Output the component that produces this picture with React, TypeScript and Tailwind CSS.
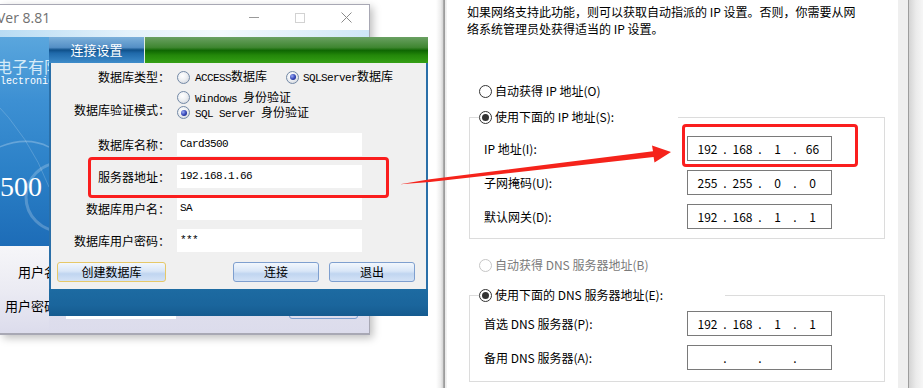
import React from 'react'

function M({ children }: { children: React.ReactNode }) {
  return <span className="font-['Liberation_Mono',monospace] text-[11px] tracking-[-0.6px]">{children}</span>
}

function XpRadio({ checked }: { checked?: boolean }) {
  return (
    <span className="flex h-[13px] w-[13px] shrink-0 items-center justify-center rounded-full border border-[#7389a6] bg-[radial-gradient(circle_at_40%_35%,#ffffff_0%,#eef0f3_45%,#c9ced6_100%)]">
      {checked && <span className="h-[6px] w-[6px] rounded-full bg-[radial-gradient(circle_at_35%_35%,#9aaaf5_0%,#3042b4_55%,#18206e_100%)]" />}
    </span>
  )
}

function WinRadio({ checked, disabled }: { checked?: boolean; disabled?: boolean }) {
  return (
    <span className={disabled ? 'flex h-[13px] w-[13px] shrink-0 items-center justify-center rounded-full border border-[#c6c6c6] bg-white' : 'flex h-[13px] w-[13px] shrink-0 items-center justify-center rounded-full border border-[#333333] bg-white'}>
      {checked && <span className="h-[7px] w-[7px] rounded-full bg-[#333333]" />}
    </span>
  )
}

function XpButton({ label, focus }: { label: string; focus?: boolean }) {
  return (
    <div className={focus
      ? 'flex h-[20px] w-[109px] items-center justify-center rounded-[3px] border border-[#e6c868] bg-[linear-gradient(to_bottom,#f2f7fd_0%,#d9e6f7_45%,#c0d5f0_60%,#d3e2f6_100%)] text-[12px]'
      : 'flex h-[20px] w-[86px] items-center justify-center rounded-[3px] border border-[#7e9fcf] bg-[linear-gradient(to_bottom,#f2f7fd_0%,#d9e6f7_45%,#c0d5f0_60%,#d3e2f6_100%)] text-[12px]'}>
      {label}
    </div>
  )
}

function IpBox({ parts }: { parts: string[] }) {
  return (
    <div className="flex h-[25px] w-[145px] items-center border border-[#7a7a7a] bg-white pl-[5px] text-[12px]">
      {parts.map((p, i) => (
        <React.Fragment key={i}>
          {i > 0 && <span className="w-[6px] text-center">.</span>}
          <span className="w-[29px] text-center">{p}</span>
        </React.Fragment>
      ))}
    </div>
  )
}

function BackWindow() {
  return (
    <div className="absolute left-0 top-[4px] flex h-[331px] w-[370px] flex-col border-r border-t border-b-2 border-[#a8a8b4] bg-white shadow-[3px_3px_8px_rgba(0,0,0,0.25)]">
      {/* title bar */}
      <div className="flex h-[25px] items-center">
        <span className="-ml-[3px] font-['Open_Sans',sans-serif] text-[14px] text-[#707070]">Ver 8.81</span>
        <div className="ml-auto flex h-full">
          <div className="flex w-[46px] items-center justify-center">
            <span className="h-px w-[10px] bg-[#9a9a9a]" />
          </div>
          <div className="flex w-[46px] items-center justify-center">
            <span className="h-[10px] w-[10px] border border-[#d2d2d2]" />
          </div>
          <div className="flex w-[46px] items-center justify-center">
            <svg width="11" height="11" viewBox="0 0 11 11">
              <path d="M0.5 0.5 L10.5 10.5 M10.5 0.5 L0.5 10.5" stroke="#8a8a8a" strokeWidth="1" />
            </svg>
          </div>
        </div>
      </div>
      {/* sky strip */}
      <div className="h-[7px] bg-[linear-gradient(to_right,#b9dcf3_0%,#e4f2fb_35%,#f3f9fd_60%,#cfe7f7_100%)]" />
      <div className="flex flex-1">
        <div className="flex w-[49px] flex-col">
          <div className="relative h-[209px] overflow-hidden bg-[linear-gradient(to_bottom,#5aa6dd_0%,#3d90d3_30%,#2b80c7_65%,#1d6cb7_100%)]">
            <svg className="absolute inset-0" width="49" height="209" viewBox="0 0 49 209">
              <path d="M-20 120 Q20 95 49 110" stroke="rgba(255,255,255,0.25)" strokeWidth="1.5" fill="none" />
              <path d="M-10 60 Q30 100 49 150" stroke="rgba(255,255,255,0.18)" strokeWidth="1" fill="none" />
              <circle cx="60" cy="160" r="34" stroke="rgba(255,255,255,0.22)" strokeWidth="3" fill="none" />
            </svg>
            <div className="relative flex w-[49px] flex-col overflow-hidden whitespace-nowrap">
              <span className="-ml-[4px] mt-[19px] font-['Noto_Sans_CJK_SC',sans-serif] text-[16px] leading-[20px] text-[#d6ebf8]">电子有限</span>
              <span className="-ml-[6px] mt-[1px] font-['Liberation_Mono',monospace] text-[10px] leading-[10px] text-white">Electronic</span>
              <span className="-ml-[14px] mt-[85px] font-['Liberation_Serif',serif] text-[28px] leading-[30px] text-white">3500</span>
            </div>
          </div>
          <div className="flex flex-1 flex-col bg-[linear-gradient(to_bottom,#f6f6f9_0%,#ebebf3_50%,#dcdcec_100%)]">
            <div className="w-[57px] whitespace-nowrap text-right font-['Noto_Sans_CJK_SC',sans-serif] text-[13px] leading-[18px]">
              <div className="mt-[17px]">用户名</div>
              <div className="mt-[16px]">用户密码</div>
            </div>
          </div>
        </div>
        <div className="flex flex-1 flex-col justify-end bg-[linear-gradient(to_bottom,#f6f6f9_0%,#ebebf3_50%,#dcdcec_100%)] pb-[14px]">
          <div className="flex items-end">
            <div className="ml-[17px] h-[20px] w-[110px] bg-white" />
            <div className="ml-[113px] h-[22px] w-[69px] rounded-[3px] border border-[#7e9fcf]" />
          </div>
        </div>
      </div>
    </div>
  )
}

function ConfigDialog() {
  const inputs: [string, string][] = [
    ['数据库名称：', 'Card3500'],
    ['服务器地址：', '192.168.1.66'],
    ['数据库用户名：', 'SA'],
    ['数据库用户密码：', '***'],
  ]
  return (
    <div className="absolute left-[49px] top-[37px] flex h-[279px] w-[379px] flex-col font-['Noto_Sans_CJK_SC',sans-serif] text-[12px] text-black">
      <div className="flex h-[26px]">
        <div className="flex w-[95px] items-center justify-center bg-[linear-gradient(to_bottom,#7cb0da_0%,#5590c6_40%,#0f5089_50%,#1f69aa_62%,#3e8cca_100%)] text-[13px] text-white">
          连接设置
        </div>
        <div className="w-px bg-[#dfeee0]" />
        <div className="flex-1 bg-[linear-gradient(to_bottom,#6aa062_0%,#3f8631_40%,#0f6702_52%,#23870a_70%,#35a015_100%)]" />
      </div>
      <div className="flex flex-1 flex-col border-x-2 border-[#2a6fa8] bg-[#f0f0f0]">
        <div className="mt-[3px] flex h-[22px] items-center">
          <div className="w-[119px] text-right">数据库类型：</div>
          <div className="ml-[7px] flex w-[109px] items-center gap-[5px]">
            <XpRadio />
            <span><M>ACCESS</M>数据库</span>
          </div>
          <div className="flex items-center gap-[4px]">
            <XpRadio checked />
            <span><M>SQLServer</M>数据库</span>
          </div>
        </div>
        <div className="mt-[2px] flex">
          <div className="flex h-[30px] w-[119px] items-end justify-end pb-[1px]">数据库验证模式：</div>
          <div className="ml-[7px] flex flex-col">
            <div className="flex h-[15px] items-center gap-[5px]">
              <XpRadio />
              <span><M>Windows </M>身份验证</span>
            </div>
            <div className="flex h-[15px] items-center gap-[5px]">
              <XpRadio checked />
              <span><M>SQL Server </M>身份验证</span>
            </div>
          </div>
        </div>
        <div className="mt-[13px] flex flex-col gap-[9px]">
          {inputs.map(([label, value]) => (
            <div key={label} className="flex h-[23px] items-center">
              <div className="w-[119px] text-right">{label}</div>
              <div className="ml-[7px] flex h-full w-[185px] items-center bg-white pl-[3px]">
                <M>{value}</M>
              </div>
            </div>
          ))}
        </div>
        <div className="mt-[10px] flex items-center pl-[6px] pr-[11px]">
          <XpButton label="创建数据库" focus />
          <div className="ml-auto flex gap-[10px]">
            <XpButton label="连接" />
            <XpButton label="退出" />
          </div>
        </div>
      </div>
      <div className="h-[27px] bg-[linear-gradient(to_bottom,#1d6ba2_0%,#1a659c_60%,#155b8f_100%)]" />
    </div>
  )
}

function IpDialog() {
  return (
    <div className="absolute left-[436px] top-0 flex h-[388px] w-[487px] font-['Noto_Sans_CJK_SC',sans-serif] text-[12px] text-black">
      <div className="w-[11px] bg-[linear-gradient(to_right,#ffffff_0%,#eeeeee_40%,#d6d6d6_62%,#9c9c9c_70%,#9c9c9c_78%,#e9e9e9_84%,#f4f4f4_100%)]" />
      <div className="flex w-[451px] flex-col bg-white">
        <p className="pl-[20px] pt-[3px] leading-[17px]">
          如果网络支持此功能，则可以获取自动指派的 IP 设置。否则，你需要从网
          <br />
          络系统管理员处获得适当的 IP 设置。
        </p>
        <div className="ml-[32px] mt-[45px] flex h-[18px] items-center gap-[3px]">
          <WinRadio />
          <span>自动获得 IP 地址(O)</span>
        </div>
        <div className="ml-[22px] mt-[17px] w-[416px] border border-[#dcdcdc] pb-[9px]">
          <div className="-mt-[10px] ml-[9px] flex h-[18px] w-[199px] items-center gap-[3px] bg-white">
            <WinRadio checked />
            <span>使用下面的 IP 地址(S):</span>
          </div>
          <div className="mt-[10px] flex flex-col gap-[9px]">
            {([
              ['IP 地址(I):', ['192', '168', '1', '66']],
              ['子网掩码(U):', ['255', '255', '0', '0']],
              ['默认网关(D):', ['192', '168', '1', '1']],
            ] as [string, string[]][]).map(([label, parts]) => (
              <div key={label} className="flex items-center pl-[14px]">
                <span className="w-[203px]">{label}</span>
                <IpBox parts={parts} />
              </div>
            ))}
          </div>
        </div>
        <div className="ml-[32px] mt-[17px] flex h-[18px] items-center gap-[3px] text-[#7a7a7a]">
          <WinRadio disabled />
          <span>自动获得 DNS 服务器地址(B)</span>
        </div>
        <div className="ml-[22px] mt-[21px] w-[416px] border border-[#dcdcdc] pb-[11px]">
          <div className="-mt-[10px] ml-[9px] flex h-[18px] w-[246px] items-center gap-[3px] bg-white">
            <WinRadio checked />
            <span>使用下面的 DNS 服务器地址(E):</span>
          </div>
          <div className="mt-[7px] flex flex-col gap-[9px]">
            {([
              ['首选 DNS 服务器(P):', ['192', '168', '1', '1']],
              ['备用 DNS 服务器(A):', ['', '', '', '']],
            ] as [string, string[]][]).map(([label, parts]) => (
              <div key={label} className="flex items-center pl-[14px]">
                <span className="w-[203px]">{label}</span>
                <IpBox parts={parts} />
              </div>
            ))}
          </div>
        </div>
      </div>
      <div className="w-[10px] bg-[#efefef]" />
      <div className="w-px bg-[#9d9d9d]" />
      <div className="flex-1 bg-[linear-gradient(to_right,#d4d4d4_0%,#ebebeb_50%,#f6f6f6_100%)]" />
    </div>
  )
}

export default function App() {
  return (
    <div className="relative h-[388px] w-[923px] overflow-hidden bg-white">
      <BackWindow />
      <ConfigDialog />
      <IpDialog />

      {/* annotations */}
      <div className="absolute left-[88px] top-[157px] h-[41px] w-[301px] rounded-[4px] border-[3px] border-[#fa1e1e]" />
      <div className="absolute left-[682px] top-[124px] h-[43px] w-[176px] rounded-[4px] border-[3px] border-[#fa1e1e]" />
      <svg className="pointer-events-none absolute left-0 top-0" width="923" height="388" viewBox="0 0 923 388">
        <polygon
          points="400,184.3 430,179.2 653,151.3 652,145.6 671,152 654.5,162.6 653.6,156.9 430,182.1"
          fill="#f5231b"
        />
      </svg>
    </div>
  )
}
